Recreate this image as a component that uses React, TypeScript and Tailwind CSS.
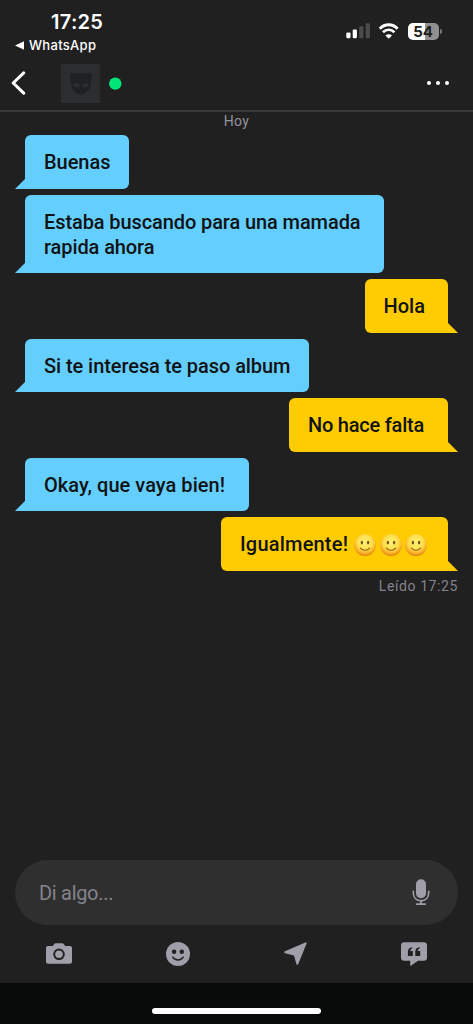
import clsx from "clsx";

interface Message {
  id: number;
  lines: string[];
  mine: boolean;
  smileys?: number;
  // bubble width and tracking
  className: string;
}

const MESSAGES: Message[] = [
  { id: 1, lines: ["Buenas"], mine: false, className: "w-[104px] tracking-[-0.05px]" },
  {
    id: 2,
    lines: ["Estaba buscando para una mamada", "rapida ahora"],
    mine: false,
    className: "w-[359px] tracking-[-0.1px]",
  },
  { id: 3, lines: ["Hola"], mine: true, className: "w-[83.5px] tracking-[0px]" },
  {
    id: 4,
    lines: ["Si te interesa te paso album"],
    mine: false,
    className: "w-[284px] tracking-[-0.07px]",
  },
  { id: 5, lines: ["No hace falta"], mine: true, className: "w-[159px] tracking-[-0.22px]" },
  {
    id: 6,
    lines: ["Okay, que vaya bien!"],
    mine: false,
    className: "w-[224px] tracking-[0.04px]",
  },
  {
    id: 7,
    lines: ["Igualmente!"],
    mine: true,
    smileys: 3,
    className: "w-[227px] tracking-[0.2px]",
  },
];

function SignalIcon() {
  return (
    <svg width="24" height="16" viewBox="0 0 24 16">
      <rect x="0.3" y="9.4" width="4.2" height="5.8" rx="1.2" fill="#fff" />
      <rect x="6.7" y="6.4" width="4.2" height="8.8" rx="1.2" fill="#fff" />
      <rect x="13.2" y="3.2" width="4.2" height="12" rx="1.2" fill="#4c4c4c" />
      <rect x="19.7" y="0.2" width="4.2" height="15" rx="1.2" fill="#4c4c4c" />
    </svg>
  );
}

function WifiIcon() {
  return (
    <svg width="21" height="16" viewBox="0 0 21 16" fill="none" stroke="#fff">
      <path d="M1.8 5.7C6.7.4 14.7.4 19.6 5.7" strokeWidth="2.8" />
      <path d="M5 9.2C8.2 5.9 13.2 5.9 16.4 9.2" strokeWidth="2.7" />
      <path d="M10.7 15.8 7.4 12.5C9.2 10.8 12.2 10.8 14 12.5Z" fill="#fff" stroke="none" />
    </svg>
  );
}

function Battery() {
  return (
    <div className="flex items-center">
      <div className="flex h-[17px] w-[31px] items-center justify-center rounded-[5px] bg-[linear-gradient(90deg,#fff_54%,#909090_54%)] font-['Inter',sans-serif] text-[15px] leading-none font-bold text-[#202020]">
        54
      </div>
      <div className="ml-px h-[5px] w-[2px] rounded-r-full bg-[#777]" />
    </div>
  );
}

function MaskIcon() {
  return (
    <svg width="22" height="23" viewBox="0 0 22 23">
      <path
        d="M2 .8C7 1.8 15 1.8 20 .8 21 .8 21.8 1.6 21.8 3 21.8 7 21.4 12 20 15.5 18 20 14 22.5 11 22.5S4 20 2 15.5C.6 12 .2 7 .2 3 .2 1.6 1 .8 2 .8Z"
        fill="#202123"
      />
      <path
        d="M3.2 11.3C6 10.8 8.4 11.4 9.6 13.2 9.4 15 8.4 15.5 7 15.4 5 15.3 3.4 13.8 3.2 11.3ZM18.8 11.3C16 10.8 13.6 11.4 12.4 13.2 12.6 15 13.6 15.5 15 15.4 17 15.3 18.6 13.8 18.8 11.3Z"
        fill="#2d2e30"
      />
    </svg>
  );
}

function Smiley() {
  return (
    <svg width="22" height="22" viewBox="0 0 22 22">
      <defs>
        <radialGradient id="smiley" cx="50%" cy="38%" r="64%">
          <stop offset="0" stopColor="#fff078" />
          <stop offset="0.5" stopColor="#fee04c" />
          <stop offset="0.76" stopColor="#fbb62a" />
          <stop offset="1" stopColor="#d9730a" />
        </radialGradient>
      </defs>
      <circle cx="11" cy="11" r="11" fill="url(#smiley)" />
      <ellipse cx="7.9" cy="8.6" rx="1.15" ry="1.9" fill="#79501a" />
      <ellipse cx="14.1" cy="8.6" rx="1.15" ry="1.9" fill="#79501a" />
      <path
        d="M6.4 14.1C8.8 16.9 13.2 16.9 15.6 14.1"
        fill="none"
        stroke="#936019"
        strokeWidth="1.1"
        strokeLinecap="round"
      />
    </svg>
  );
}

function CameraIcon() {
  return (
    <svg width="26" height="21" viewBox="0 0 26 21">
      <path
        d="M2 3H6.8L8.2 1C8.6.4 9 .2 9.6.2H16.4C17 .2 17.4.4 17.8 1L19.2 3H24C25.2 3 26 3.8 26 5V18.8C26 20 25.2 20.8 24 20.8H2C.8 20.8 0 20 0 18.8V5C0 3.8.8 3 2 3Z"
        fill="#9f9ea9"
      />
      <circle cx="13" cy="11.3" r="4.8" fill="none" stroke="#202020" strokeWidth="2" />
    </svg>
  );
}

function FaceIcon() {
  return (
    <svg width="24" height="24" viewBox="0 0 24 24">
      <circle cx="12" cy="12" r="12" fill="#9f9ea9" />
      <circle cx="8.1" cy="9.7" r="2.2" fill="#202020" />
      <circle cx="15.8" cy="9.7" r="2.2" fill="#202020" />
      <path
        d="M6.8 15.2C9 18.9 15 18.9 17.2 15.2"
        fill="none"
        stroke="#202020"
        strokeWidth="1.5"
        strokeLinecap="round"
      />
    </svg>
  );
}

function LocationIcon() {
  return (
    <svg width="23" height="23" viewBox="0 0 23 23">
      <path
        d="M.9 9.3 21.3.4C22.2 0 22.9.6 22.6 1.5L14.3 22C13.9 23.1 12.7 23 12.4 21.9L10 13.5 1 11.2C-.1 10.9-.2 9.8.9 9.3Z"
        fill="#9f9ea9"
      />
    </svg>
  );
}

function QuoteIcon() {
  return (
    <svg width="26" height="24" viewBox="0 0 26 24">
      <path
        d="M3 .2H23C24.8.2 26 1.4 26 3.2V15.7C26 17.5 24.8 18.7 23 18.7H17L10.3 23.5C9.7 23.9 9.2 23.6 9.2 22.9V18.7H3C1.2 18.7 0 17.5 0 15.7V3.2C0 1.4 1.2.2 3 .2Z"
        fill="#9f9ea9"
      />
      <path
        d="M11.2 5.2V6.6C9.9 7.1 9.3 7.9 9.3 9H11.8V13.9H6.9V9.6C6.9 7 8.4 5.4 11.2 5.2ZM18.6 5.2V6.6C17.3 7.1 16.7 7.9 16.7 9H19.2V13.9H14.3V9.6C14.3 7 15.8 5.4 18.6 5.2Z"
        fill="#202020"
      />
    </svg>
  );
}

function MicIcon() {
  return (
    <svg width="18" height="27" viewBox="0 0 18 27" fill="none" stroke="#9f9ea9">
      <rect x="4" y="0.2" width="10" height="19" rx="5" fill="#9f9ea9" stroke="none" />
      <path
        d="M1.3 12.2V13.7C1.3 18.7 4.6 21.7 9 21.7S16.7 18.7 16.7 13.7V12.2"
        strokeWidth="1.6"
        strokeLinecap="round"
      />
      <path d="M9 21.5V25.2M4.8 25.2H13.2" strokeWidth="1.7" strokeLinecap="round" />
    </svg>
  );
}

function Bubble({ message }: { message: Message }) {
  const { mine, lines, smileys = 0, className } = message;

  return (
    <div
      className={clsx(
        "relative rounded-[6px] pt-[15px] pb-[13.5px] pl-[19px] text-[20px] leading-[25px] font-medium whitespace-nowrap text-[#101214]",
        mine ? "self-end rounded-br-none bg-[#ffcc01]" : "self-start rounded-bl-none bg-[#64cfff]",
        className
      )}
    >
      {lines.map((line, i) => (
        <div key={line} className="flex items-center">
          <span>{line}</span>
          {i === lines.length - 1 && smileys > 0 ? (
            <span className="ml-auto flex gap-[3.5px] pr-[21px]">
              {Array.from({ length: smileys }, (_, n) => (
                <Smiley key={n} />
              ))}
            </span>
          ) : null}
        </div>
      ))}
      <svg
        width="11"
        height="10"
        viewBox="0 0 11 10"
        className={clsx("absolute bottom-0", mine ? "-right-[10px]" : "-left-[10px]")}
      >
        {mine ? (
          <path d="M0 0H1L11 10H0Z" fill="#ffcc01" />
        ) : (
          <path d="M11 0H10L0 10H11Z" fill="#64cfff" />
        )}
      </svg>
    </div>
  );
}

function StatusBar() {
  return (
    <div className="flex h-14 justify-between font-['Inter',sans-serif] text-white">
      <div className="pt-[10px] pl-[15px]">
        <div className="pl-[36px] text-[20px] leading-6 font-semibold tracking-[0.3px]">17:25</div>
        <div className="mt-[3px] flex items-center gap-[5px]">
          <svg width="9" height="9" viewBox="0 0 9 9">
            <path d="M0 4.5 9 .3V8.7Z" fill="#fff" />
          </svg>
          <span className="text-[13px] leading-4 font-medium tracking-[0.3px]">WhatsApp</span>
        </div>
      </div>
      <div className="mt-[23px] flex h-4 items-center gap-[8.5px] pr-[31.5px]">
        <SignalIcon />
        <WifiIcon />
        <Battery />
      </div>
    </div>
  );
}

function ChatHeader() {
  return (
    <header className="flex h-[56px] items-center border-b-2 border-[#38393c] pl-[11px]">
      <svg width="15" height="24" viewBox="0 0 15 24" fill="none" stroke="#fff" strokeWidth="3">
        <path d="M12.7 1.8 2.2 12 12.7 22.2" strokeLinecap="round" strokeLinejoin="round" />
      </svg>
      <div className="ml-[35px] flex size-[39px] items-center justify-center bg-[#2c2d2f]">
        <MaskIcon />
      </div>
      <svg className="ml-[9px]" width="13" height="13" viewBox="0 0 13 13">
        <circle cx="6.3" cy="6.6" r="6.2" fill="#00e676" />
      </svg>
      <div className="mr-[24px] ml-auto flex gap-[5px]">
        <span className="size-1 rounded-full bg-white" />
        <span className="size-1 rounded-full bg-white" />
        <span className="size-1 rounded-full bg-white" />
      </div>
    </header>
  );
}

export default function App() {
  return (
    <div className="flex h-[1024px] w-[473px] flex-col overflow-hidden bg-[#202020] font-['Roboto',sans-serif]">
      <StatusBar />
      <ChatHeader />

      <main className="flex flex-1 flex-col">
        <div className="h-[23.3px] text-center text-[14px] leading-[18px] tracking-[0.3px] text-[#93929d]">
          Hoy
        </div>
        <div className="flex flex-col gap-[6px] px-[25px]">
          {MESSAGES.map((message) => (
            <Bubble key={message.id} message={message} />
          ))}
        </div>
        <div className="mt-[6px] pr-[15px] text-right text-[14px] leading-[18px] tracking-[0.6px] text-[#84838d]">
          Leído 17:25
        </div>
      </main>

      <footer>
        <div className="mx-[15px] flex h-[64.5px] items-center justify-between rounded-full bg-[#2f2f2f] pr-[28px] pl-[24px]">
          <span className="pt-[2px] text-[20px] leading-[25px] tracking-[-0.3px] text-[#84838d]">
            Di algo...
          </span>
          <MicIcon />
        </div>
        <div className="flex h-[58.5px] items-center justify-between px-[46px]">
          <CameraIcon />
          <FaceIcon />
          <LocationIcon />
          <QuoteIcon />
        </div>
        <div className="flex h-[41px] justify-center bg-[#080a09] pt-[25px]">
          <div className="h-[6px] w-[169px] rounded-full bg-white" />
        </div>
      </footer>
    </div>
  );
}
